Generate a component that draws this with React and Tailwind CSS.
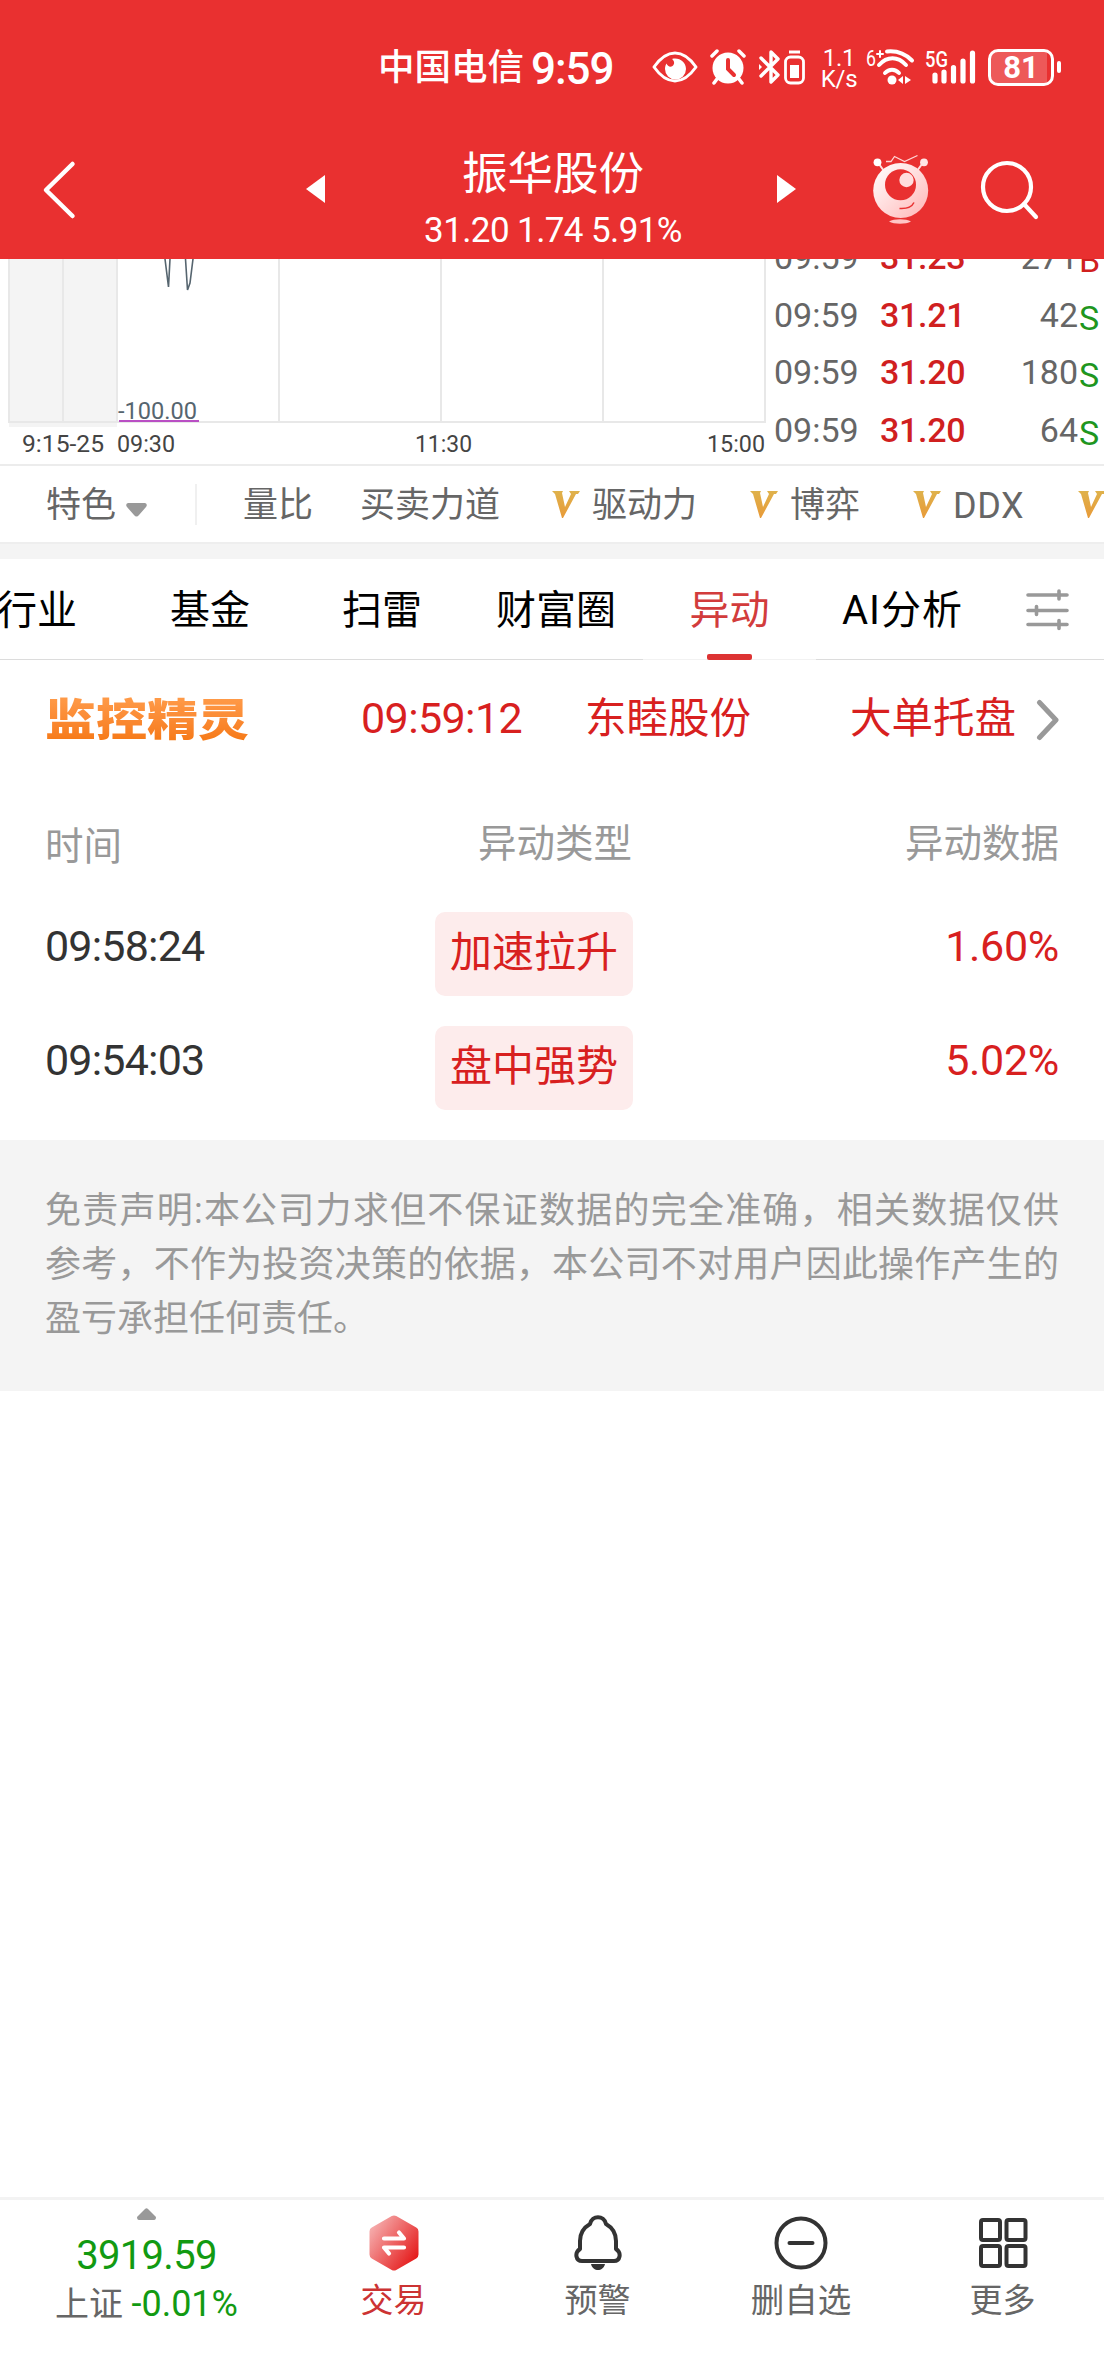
import React from 'react';

const trades = [
    { price: '31.23', volume: '271', side: 'B' },
    { price: '31.21', volume: '42', side: 'S' },
    { price: '31.20', volume: '180', side: 'S' },
    { price: '31.20', volume: '64', side: 'S' },
];

const changes = [
    { time: '09:58:24', type: '加速拉升', value: '1.60%' },
    { time: '09:54:03', type: '盘中强势', value: '5.02%' },
];

function StatusBar() {
    return (
        <div className="flex h-[134px] items-center pl-[378px]">
            <span className="w-[153px] pt-[3px] text-[36.500px] font-medium whitespace-nowrap">中国电信</span>
            <span className="w-[121px] pt-[3px] text-[44px] font-medium tracking-[-1px]">9:59</span>
            {/* Eye */}
            <svg width="46" height="32" viewBox="0 0 46 32" fill="none">
                <path d="M2 16C9 6 16 2 23 2s14 4 21 14C37 26 30 30 23 30S9 26 2 16z" stroke="white" strokeWidth="3" strokeLinejoin="round" />
                <path d="M20 8c7-2 14 3 14 10a10.500 10.500 0 0 1-21 0c0-2 .5-4 1.500-5.500 1 3 4 4 6 2.500 2.500-2 2-5-.5-7z" fill="white" />
            </svg>
            {/* Alarm */}
            <svg className="ml-3" width="36" height="36" viewBox="0 0 36 36" fill="none" strokeLinecap="round">
                <circle cx="18" cy="19" r="15.500" fill="white" />
                <path d="M2 7l5-5M34 7l-5-5M7 30l-3 4M29 30l3 4" stroke="white" strokeWidth="3.500" />
                <path d="M18 11v9l6 6" stroke="#e93030" strokeWidth="4" />
            </svg>
            {/* Bluetooth with its battery */}
            <svg className="ml-3" width="48" height="36" viewBox="0 0 48 36" fill="none" stroke="white">
                <path d="M3 9l17 17-7 7V3l7 7L3 27" strokeWidth="3.400" strokeLinecap="round" strokeLinejoin="round" />
                <path d="M1 15v6l3-3z" fill="white" stroke="none" />
                <rect x="27.500" y="8" width="18" height="26" rx="5" strokeWidth="2.800" />
                <path d="M31 3h11" strokeWidth="3" />
                <path d="M32 16h9v13h-9z" fill="white" stroke="none" />
            </svg>
            <div className="ml-[14px] flex w-[38px] flex-col items-center pt-[3px] text-[24px] leading-[21px] tracking-[-0.300px]">
                <span>1.1</span>
                <span>K/s</span>
            </div>
            {/* Wifi */}
            <svg className="ml-[8px] overflow-visible" width="50" height="38" viewBox="0 0 50 38" fill="none" stroke="white" strokeWidth="4" strokeLinecap="round">
                <text x="0" y="18" fontSize="22" fill="white" stroke="none" textLength="10" lengthAdjust="spacingAndGlyphs">6</text>
                <path d="M11 6h6M14 3v6" strokeWidth="2" />
                <path d="M21 3.500c10-1 18 2 25 9M13 17c8-9 19-9 27 0M19 25c4-4.500 10-4.500 14 0" />
                <circle cx="26" cy="32" r="4.500" fill="white" stroke="none" />
                <path d="M32 32l5-4v8zM39 28l6 4-6 4z" fill="white" stroke="none" />
            </svg>
            {/* Cell signal */}
            <svg className="ml-[9px] overflow-visible" width="52" height="38" viewBox="0 0 52 38" fill="none">
                <text x="0" y="19" fontSize="22" fill="white" fontWeight="500" textLength="23" lengthAdjust="spacingAndGlyphs">5G</text>
                <path d="M10 27v6M19 24v9M28.500 19.500v13.500M38 13v20M47.500 5v28" stroke="white" strokeWidth="5.200" strokeLinecap="round" />
            </svg>
            <div className="ml-[11px] flex h-[37px] w-[66px] rounded-[10px] border-[3px] border-white">
                <div className="flex w-[56px] items-center justify-center rounded-l-[6px] bg-white/20 pl-1 text-[31px] leading-[31px] font-bold">81</div>
            </div>
            <div className="ml-[3px] h-[12px] w-[4px] rounded-full bg-white" />
        </div>
    );
}

function Mascot() {
    return (
        <svg width="64" height="80" viewBox="868 150 64 80" fill="none">
            <defs>
                <linearGradient id="body" x1="0" y1="0" x2="1" y2="1">
                    <stop offset="0" stopColor="#fff" />
                    <stop offset="0.45" stopColor="#ffe0e0" />
                    <stop offset="1" stopColor="#ffb5b5" />
                </linearGradient>
            </defs>
            <path d="M879 164l5 7M922 164l-5 7" stroke="#ffdede" strokeWidth="2" />
            <circle cx="877.500" cy="162.300" r="3.900" fill="white" />
            <circle cx="924" cy="162.300" r="3.900" fill="#ffe5e5" />
            <path d="M886 161.500h5l3.500-5 10 5 13-6" stroke="#ffd5d5" strokeWidth="1.300" />
            <circle cx="900.700" cy="190.500" r="27.500" fill="url(#body)" />
            <circle cx="900.500" cy="184.700" r="15.500" fill="#e93030" />
            <circle cx="906.500" cy="180" r="7.200" fill="#ffdede" />
            <path d="M899.500 208.500c7 .5 12-1 14.500-6" stroke="#e93030" strokeWidth="1.500" />
            <path d="M889 221.500c5-3 17-3 22 0-5 3-17 3-22 0z" fill="#ffc5c5" />
        </svg>
    );
}

function TitleBar() {
    return (
        <div className="flex h-[125px] items-start">
            <svg className="mt-[26px] ml-[42px]" width="34" height="60" viewBox="0 0 34 60" fill="none" stroke="white" strokeWidth="4.500" strokeLinecap="round" strokeLinejoin="round">
                <path d="M30.500 4L4 30l26.500 26" />
            </svg>
            <svg className="mt-[41px] ml-[230px]" width="19" height="28" viewBox="0 0 19 28" fill="white">
                <path d="M19 0v28L0 14z" />
            </svg>
            <div className="ml-[79px] flex w-[298px] flex-col items-center whitespace-nowrap">
                <h1 className="mt-[14px] text-[45.500px] leading-[54px]">振华股份</h1>
                <p className="mt-[8px] text-[35px] leading-[42px] tracking-[-0.600px]">31.20 1.74 5.91%</p>
            </div>
            <svg className="mt-[41px] ml-[75px]" width="19" height="28" viewBox="0 0 19 28" fill="white">
                <path d="M0 0v28l19-14z" />
            </svg>
            <div className="mt-[16px] ml-[72px]">
                <Mascot />
            </div>
            <svg className="mt-[26px] ml-[47px]" width="62" height="62" viewBox="0 0 62 62" fill="none" stroke="white" strokeWidth="4.200" strokeLinecap="round">
                <circle cx="28" cy="27" r="24" />
                <path d="M45 44l12 13" />
            </svg>
        </div>
    );
}

function Chart() {
    return (
        <svg className="shrink-0" width="768" height="205" viewBox="0 259 768 205" fontSize="24" fill="#444">
            <rect x="9" y="259" width="108" height="168" fill="#f4f4f4" />
            <path d="M9 259v163M63 259v163M117 259v163M279 259v163M441 259v163M603 259v163M765 259v164M8 422h758" stroke="#e8e8e8" strokeWidth="2" />
            <path d="M165 259l3.500 28 1.500-28M185.500 259l2 31 2.500-7 3-24" fill="none" stroke="#56656f" strokeWidth="1.600" />
            <text x="118" y="419" fill="#56656f" textLength="79" lengthAdjust="spacingAndGlyphs">-100.00</text>
            <path d="M119 421h80" stroke="#b94fc4" strokeWidth="2" />
            <text x="22" y="452" textLength="82" lengthAdjust="spacingAndGlyphs">9:15-25</text>
            <text x="117" y="452" textLength="58" lengthAdjust="spacingAndGlyphs">09:30</text>
            <text x="415" y="452" textLength="57" lengthAdjust="spacingAndGlyphs">11:30</text>
            <text x="707" y="452" textLength="58" lengthAdjust="spacingAndGlyphs">15:00</text>
        </svg>
    );
}

function Trades() {
    return (
        <div className="mt-[-30px] text-[34px] leading-[57.500px] text-[#666]">
            {trades.map((t, i) => (
                <div key={i} className="flex h-[57.500px]">
                    <span className="ml-[6px] w-[106px]">09:59</span>
                    <span className="w-[90px] font-medium tracking-[-0.300px] text-[#d0201f]">{t.price}</span>
                    <span className="w-[108px] text-right">{t.volume}</span>
                    <span className={`pt-[3px] pl-[1px] ${t.side === 'B' ? 'text-[#d0201f]' : 'text-[#1f961f]'}`}>{t.side}</span>
                </div>
            ))}
        </div>
    );
}

function VipMark() {
    return (
        <svg className="shrink-0" width="28" height="27" viewBox="0 0 28 27">
            <defs>
                <linearGradient id="gold" x1="0" y1="0" x2="0" y2="1">
                    <stop offset="0" stopColor="#dfb24c" />
                    <stop offset="1" stopColor="#e89a38" />
                </linearGradient>
            </defs>
            <path d="M0 0h11l-1 2 3 14 6-13-2-3h11l-2 3h-2L11 27h-1L3 3z" fill="url(#gold)" />
        </svg>
    );
}

function IndicatorBar() {
    return (
        <div className="flex h-[78px] items-center overflow-hidden border-t-2 border-[#ececec] pl-[46px] text-[35px] whitespace-nowrap text-[#666]">
            <span className="pt-[4px]">特色</span>
            <svg className="mt-[12px] ml-[10px] shrink-0" width="21" height="14" viewBox="0 0 21 14" fill="#999">
                <path d="M2 0h17q3 1 1 4l-7 8q-2.500 3-5 0L1 4Q-1 1 2 0z" />
            </svg>
            <div className="ml-[48px] h-[41px] w-[2px] shrink-0 bg-[#f0f0f0]" />
            <span className="ml-[46px] pt-[4px]">量比</span>
            <span className="ml-[47px] mr-[52px] pt-[4px]">买卖力道</span>
            <VipMark />
            <span className="ml-[12px] mr-[53px] pt-[4px]">驱动力</span>
            <VipMark />
            <span className="ml-[12px] mr-[53px] pt-[4px]">博弈</span>
            <VipMark />
            <span className="ml-[12px] w-[125px] shrink-0 pt-[4px] text-[36px] tracking-[0.500px]">DDX</span>
            <VipMark />
        </div>
    );
}

function Tabs() {
    return (
        <div className="flex h-[101px] border-b border-[#dcdcdc] text-[40px] leading-[104px] whitespace-nowrap text-black">
            <span className="ml-[-3px]">行业</span>
            <span className="ml-[93px]">基金</span>
            <span className="ml-[92px]">扫雷</span>
            <span className="ml-[74px]">财富圈</span>
            <div className="ml-[27px] flex h-[101px] w-[173px] flex-col items-center border-b border-[#f2f2f2] text-[#d23c3c]">
                <span className="h-[95px]">异动</span>
                <div className="h-[6px] w-[45px] shrink-0 rounded-[2px] bg-[#dd3333]" />
            </div>
            <span className="ml-[26px] w-[120px] tracking-[1px]">AI分析</span>
            <svg className="mt-[30px] ml-[64px]" width="43" height="43" viewBox="0 0 43 43" stroke="#999" strokeWidth="3.600" strokeLinecap="round">
                <path d="M2 6h39M2 21.500h39M2 35.500h39M33 2v8M10.500 17.500v8M33 31.500v8" />
            </svg>
        </div>
    );
}

function MonitorRow() {
    return (
        <div className="flex h-[114px] items-center pt-[2px] text-[41.500px] whitespace-nowrap text-[#d8201f]">
            <div className="ml-[45px] w-[316px] pt-[10px]">
                <span className="inline-block origin-left scale-y-[0.870] bg-gradient-to-b from-[#ff9c4a] to-[#f57505] bg-clip-text text-[51px] leading-[60px] font-black text-transparent">监控精灵</span>
            </div>
            <span className="w-[224px] text-[43px] tracking-[-0.600px]">09:59:12</span>
            <span className="w-[265px] pt-[2px]">东睦股份</span>
            <span className="w-[186px] pt-[2px]">大单托盘</span>
            <svg className="mt-1" width="24" height="42" viewBox="0 0 24 42" fill="none" stroke="#999" strokeWidth="5" strokeLinecap="round" strokeLinejoin="round">
                <path d="M3.500 3.500L20 21 3.500 38.500" />
            </svg>
        </div>
    );
}

function ChangesTable() {
    return (
        <div className="h-[366px] px-[45px] whitespace-nowrap">
            <div className="flex h-[138px] items-center pt-[2px] text-[38.500px] text-[#999]">
                <span className="w-[433px] pt-[5px]">时间</span>
                <span className="grow">异动类型</span>
                <span>异动数据</span>
            </div>
            {changes.map(c => (
                <div key={c.time} className="flex h-[114px] items-start">
                    <span className="w-[390px] text-[43px] leading-[68px] tracking-[-0.800px] text-[#333]">{c.time}</span>
                    <div className="h-[84px] w-[198px] rounded-[10px] bg-[#fdecec] text-center text-[42px] leading-[82px] text-[#d8201f]">{c.type}</div>
                    <span className="grow text-right text-[43px] leading-[68px] tracking-[-0.300px] text-[#d8201f]">{c.value}</span>
                </div>
            ))}
        </div>
    );
}

function BottomBar() {
    return (
        <div className="flex h-[179px] border-t-[3px] border-[#f3f3f3] text-[33px] leading-[40px] whitespace-nowrap text-[#666]">
            <div className="flex w-[293px] flex-col items-center">
                <svg className="mt-[8px]" width="19" height="12" viewBox="0 0 19 12" fill="#999">
                    <path d="M8 1q1.500-1.500 3 0l8 8q0 3-2 3H2q-2 0-2-3z" />
                </svg>
                <span className="mt-[13px] text-[40px] leading-[46px] tracking-[-0.700px] text-[#129a12]">3919.59</span>
                <span className="mt-[4px] text-[34px] leading-[42px]">
                    上证 <span className="text-[36px] text-[#129a12]">-0.01%</span>
                </span>
            </div>
            <div className="flex w-[201px] flex-col items-center text-[#cc3333]">
                <svg className="mt-[15px]" width="50" height="56" viewBox="0 0 50 56" fill="none">
                    <defs>
                        <linearGradient id="hex" x1="0" y1="0.1" x2="1" y2="0.9">
                            <stop offset="0" stopColor="#f5aaaa" />
                            <stop offset="1" stopColor="#e51c1c" />
                        </linearGradient>
                    </defs>
                    <path d="M25 5l20 11.500v23L25 51 5 39.500v-23z" fill="url(#hex)" stroke="url(#hex)" strokeWidth="9" strokeLinejoin="round" />
                    <path d="M15 23.500h20l-5-6M35 32.500H15l5 6" stroke="white" strokeWidth="4.200" strokeLinecap="round" strokeLinejoin="round" />
                </svg>
                <span className="mt-[10px]">交易</span>
            </div>
            <div className="flex w-[207px] flex-col items-center">
                <svg className="mt-[15px]" width="48" height="56" viewBox="0 0 48 56" fill="none">
                    <path d="M16 9c2-9 14-9 16 0 7 4 10 10 10 17v8c6 4 4 12-2 12H8c-6 0-8-8-2-12v-8c0-7 3-13 10-17z" stroke="#333" strokeWidth="4" strokeLinejoin="round" />
                    <path d="M17 49h14c-2 8-12 8-14 0z" fill="#333" />
                </svg>
                <span className="mt-[10px]">预警</span>
            </div>
            <div className="flex w-[200px] flex-col items-center">
                <svg className="mt-[16px]" width="54" height="54" viewBox="0 0 54 54" fill="none" stroke="#333" strokeWidth="4" strokeLinecap="round">
                    <circle cx="27" cy="27" r="24.500" />
                    <path d="M15.500 27h23" />
                </svg>
                <span className="mt-[11px] text-[33.500px]">删自选</span>
            </div>
            <div className="flex w-[203px] flex-col items-center">
                <svg className="mt-[18px]" width="50" height="50" viewBox="0 0 50 50" fill="none" stroke="#333" strokeWidth="4">
                    <rect x="3" y="2" width="19" height="20" rx="2" />
                    <rect x="28.500" y="2" width="19" height="20" rx="2" />
                    <rect x="3" y="28" width="19" height="20" rx="2" />
                    <rect x="28.500" y="28" width="19" height="20" rx="2" />
                </svg>
                <span className="mt-[13px]">更多</span>
            </div>
        </div>
    );
}

function App() {
    return (
        <div className="flex h-[2376px] w-[1104px] flex-col overflow-hidden bg-white font-['Roboto','Noto_Sans_CJK_SC',sans-serif]">
            <header className="z-10 h-[259px] shrink-0 bg-[#e93030] text-white">
                <StatusBar />
                <TitleBar />
            </header>

            {/* Intraday chart and tick list, scrolled under the header */}
            <div className="flex h-[205px] shrink-0 overflow-hidden">
                <Chart />
                <Trades />
            </div>

            <IndicatorBar />
            <div className="h-[17px] shrink-0 border-t-2 border-[#eeeeee] bg-[#f4f4f4]" />
            <Tabs />
            <MonitorRow />
            <ChangesTable />

            <p className="h-[251px] shrink-0 bg-[#f4f4f4] px-[45px] pt-[44px] text-justify text-[36px] leading-[54px] text-[#999]">
                免责声明:本公司力求但不保证数据的完全准确，相关数据仅供参考，不作为投资决策的依据，本公司不对用户因此操作产生的盈亏承担任何责任。
            </p>

            <div className="grow" />
            <BottomBar />
        </div>
    );
}

export default App;
